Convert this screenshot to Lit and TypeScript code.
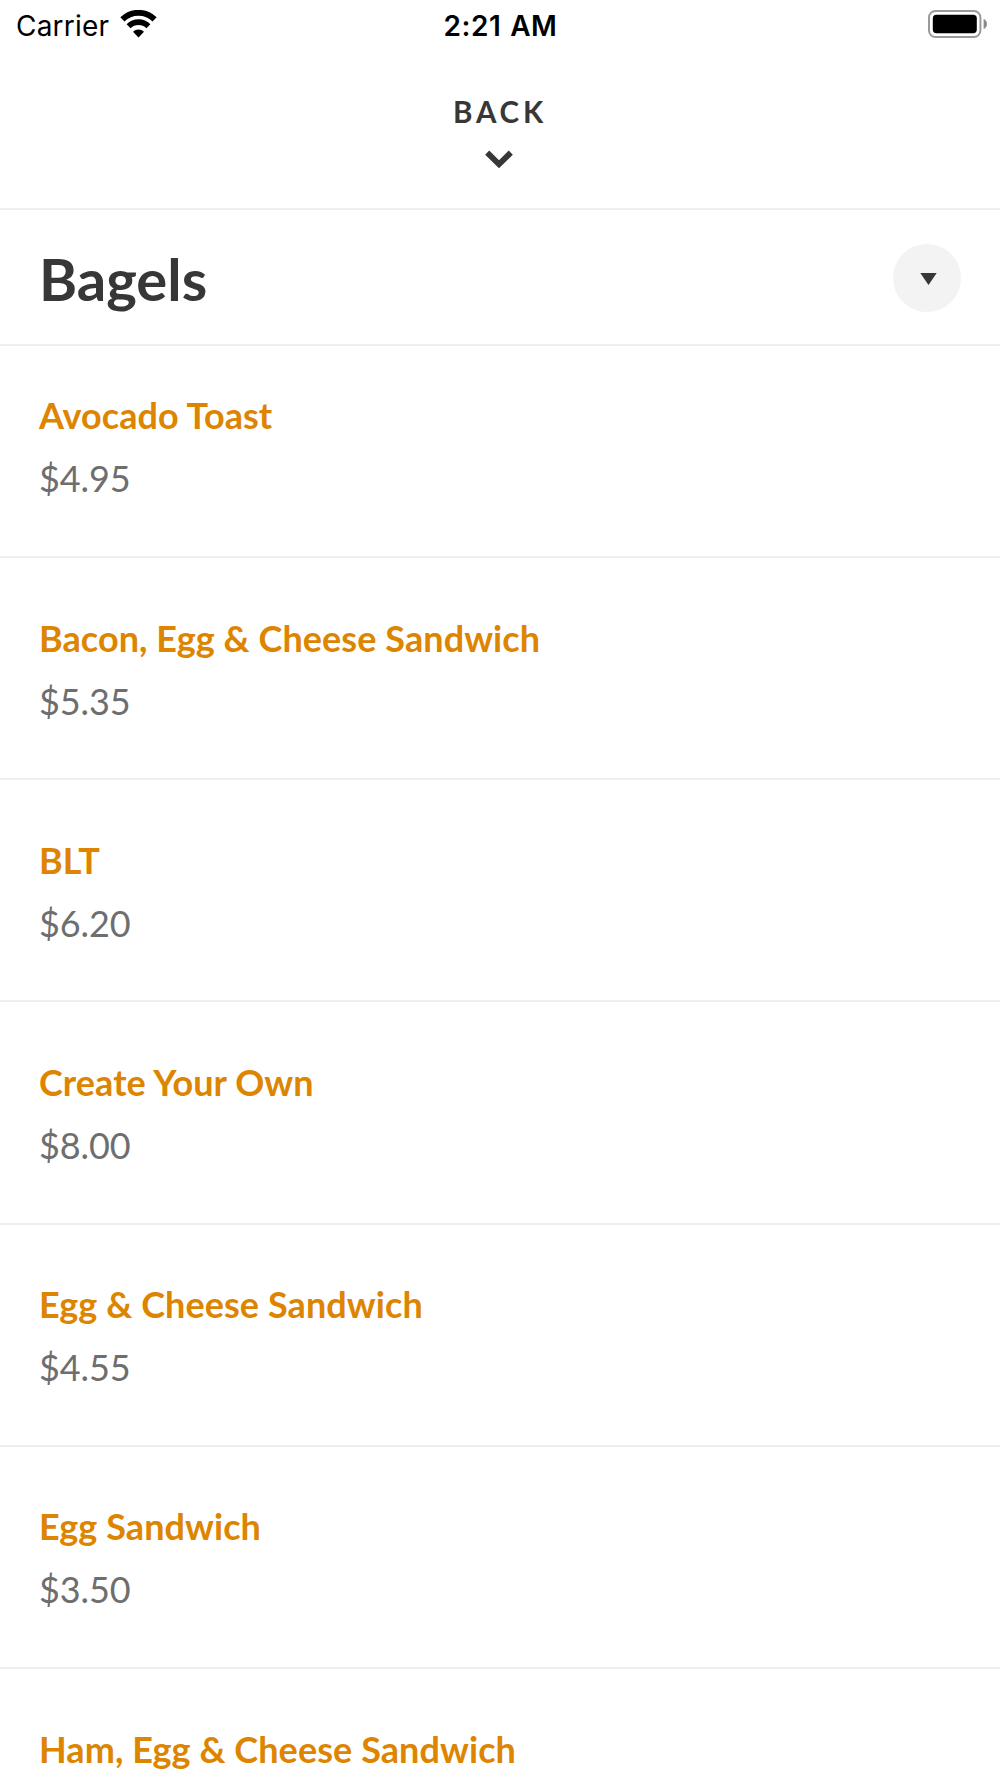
import { LitElement, html, css, svg } from "lit";
import { customElement, property } from "lit/decorators.js";

interface MenuItem {
  name: string;
  price?: string;
}

const ITEMS: MenuItem[] = [
  { name: "Avocado Toast", price: "$4.95" },
  { name: "Bacon, Egg & Cheese Sandwich", price: "$5.35" },
  { name: "BLT", price: "$6.20" },
  { name: "Create Your Own", price: "$8.00" },
  { name: "Egg & Cheese Sandwich", price: "$4.55" },
  { name: "Egg Sandwich", price: "$3.50" },
  { name: "Ham, Egg & Cheese Sandwich" },
];

@customElement("status-bar")
class StatusBar extends LitElement {
  static styles = css`
    :host {
      display: grid;
      grid-template-columns: 1fr auto 1fr;
      align-items: center;
      box-sizing: border-box;
      height: 53.3px;
      padding: 0 13px 5px 16px;
      font-family: Inter, "Liberation Sans", sans-serif;
      font-size: 28px;
      line-height: 34px;
      color: #000;
    }
    .left {
      display: flex;
      align-items: center;
      gap: 11px;
    }
    .carrier {
      padding-top: 3.6px;
      letter-spacing: 0.2px;
    }
    .time {
      padding-top: 3.6px;
      padding-right: 2px;
      font-weight: 600;
      letter-spacing: 0.6px;
      word-spacing: 1px;
    }
    .battery {
      justify-self: end;
    }
    svg {
      display: block;
    }
  `;

  render() {
    return html`
      <div class="left">
        <span class="carrier">Carrier</span>
        <svg class="wifi" width="37" height="28" viewBox="0 0 37 28">
          ${svg`
            <path d="M2.4 9.4 A22.8 22.8 0 0 1 34.6 9.4" fill="none" stroke="#000" stroke-width="5.8" />
            <path d="M8.6 16.2 A14 14 0 0 1 28.4 16.2" fill="none" stroke="#000" stroke-width="5.6" />
            <path d="M18.5 27.4 L13 21.8 A7.8 7.8 0 0 1 24 21.8 Z" fill="#000" />
          `}
        </svg>
      </div>
      <span class="time">2:21 AM</span>
      <svg class="battery" width="59" height="28" viewBox="0 0 59 28">
        <rect x="1" y="1" width="51.4" height="26" rx="6.4" fill="none" stroke="#9a9a9a" stroke-width="2" />
        <rect x="4.8" y="4.8" width="44" height="18.4" rx="3.6" fill="#000" />
        <path d="M55.6 9 A5.4 5.4 0 0 1 55.6 19 Z" fill="#8a8a8a" />
      </svg>
    `;
  }
}

@customElement("menu-row")
class MenuRow extends LitElement {
  @property() name = "";
  @property() price?: string;

  static styles = css`
    :host {
      display: flex;
      flex-direction: column;
      gap: 19px;
      box-sizing: border-box;
      height: 222.2px;
      flex: none;
      padding: 57.6px 39px 0;
      border-bottom: 2px solid #eee;
    }
    .name {
      font-size: 36px;
      font-weight: 700;
      line-height: 44px;
      letter-spacing: 0.07px;
      color: #dd8500;
    }
    .price {
      font-size: 36px;
      line-height: 44px;
      letter-spacing: -0.1px;
      color: #6e6e6e;
    }
  `;

  render() {
    return html`
      <div class="name">${this.name}</div>
      ${this.price ? html`<div class="price">${this.price}</div>` : ""}
    `;
  }
}

@customElement("app-root")
class AppRoot extends LitElement {
  static styles = css`
    :host {
      display: flex;
      flex-direction: column;
      height: 1778px;
      overflow: hidden;
      background: #fff;
      font-family: Lato, "Liberation Sans", sans-serif;
      color: #373737;
    }
    status-bar {
      flex: none;
    }
    .back {
      display: flex;
      flex-direction: column;
      align-items: center;
      box-sizing: border-box;
      flex: none;
      height: 156.7px;
      padding-top: 41.2px;
      padding-right: 3px;
      border-bottom: 2px solid #eee;
    }
    .label {
      font-size: 29.5px;
      font-weight: 700;
      line-height: 36px;
      letter-spacing: 3.8px;
      margin-right: -3px;
    }
    .chevron {
      display: block;
      margin-top: 20px;
    }
    .heading {
      display: flex;
      align-items: center;
      justify-content: space-between;
      box-sizing: border-box;
      flex: none;
      height: 135.9px;
      padding: 2.4px 39px 0 39px;
      border-bottom: 2px solid #eee;
    }
    h1 {
      margin: 0;
      padding-top: 1.6px;
      font-size: 58px;
      font-weight: 700;
      line-height: 72px;
    }
    .toggle {
      display: flex;
      align-items: center;
      justify-content: center;
      width: 67.6px;
      height: 67.6px;
      border-radius: 50%;
      background: #f3f3f3;
    }
    .triangle {
      margin: 2px 0 0 2px;
    }
    .list {
      display: flex;
      flex-direction: column;
      flex: 1;
      min-height: 0;
      overflow: hidden;
    }
    menu-row:first-child {
      height: 212.2px;
      padding-top: 47.6px;
    }
  `;

  render() {
    return html`
      <status-bar></status-bar>
      <div class="back">
        <span class="label">BACK</span>
        <svg class="chevron" width="28" height="19" viewBox="0 0 28 19">
          <path d="M2.2 2.6 L14 14.2 L25.8 2.6" fill="none" stroke="#373737" stroke-width="5.8" />
        </svg>
      </div>
      <div class="heading">
        <h1>Bagels</h1>
        <div class="toggle">
          <svg class="triangle" width="17" height="12" viewBox="0 0 17 12">
            <path d="M0.3 0 H16.7 L8.5 12 Z" fill="#373737" />
          </svg>
        </div>
      </div>
      <div class="list">
        ${ITEMS.map((i) => html`<menu-row .name=${i.name} .price=${i.price}></menu-row>`)}
      </div>
    `;
  }
}
